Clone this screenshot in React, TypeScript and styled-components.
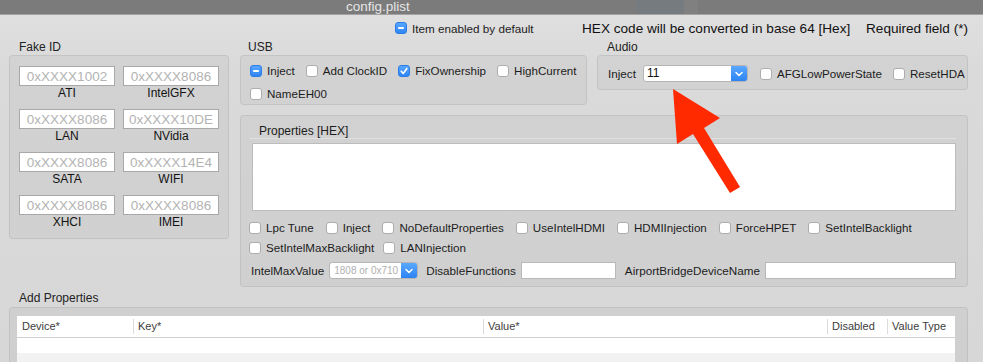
import React from "react";
import styled, { createGlobalStyle } from "styled-components";

const GlobalStyle = createGlobalStyle`
  *, *::before, *::after { box-sizing: border-box; }
  html, body { margin: 0; padding: 0; overflow: hidden; }
  body {
    background: #d8d8d8;
    font-family: "Liberation Sans", Arial, sans-serif;
    font-size: 12px;
    color: #1c1c1c;
  }
`;

const Window = styled.div`
  position: relative;
  width: 983px;
  height: 362px;
  overflow: hidden;
  background: linear-gradient(to bottom, #e0e0e0 0px, #dadada 70px, #d7d7d7 100%);
`;

const TitleBar = styled.div`
  height: 15px;
  padding-left: 346px;
  background: linear-gradient(to right, #7b7b7b 636px, #767b7f 636px, #767b7f 684px, #808080 684px, #808080 698px, #7b7b7b 698px);
  border-bottom: 1px solid #a3a3a3;
  color: #e6e6e6;
  font-size: 13.5px;
  line-height: 14px;
`;

const Toolbar = styled.div`
  display: grid;
  grid-template-columns: 187px 284px 1fr;
  align-items: center;
  height: 25px;
  padding-left: 395px;
  padding-top: 1px;
`;

const ToolItem = styled.div`
  display: flex;
  align-items: center;
  gap: 5px;
  font-size: 11.7px;
`;

const Note = styled.span`
  font-size: 13.6px;
  color: #111;
`;

const Main = styled.div`
  display: grid;
  grid-template-columns: 220px 1fr;
  column-gap: 11px;
  padding: 0 15px 0 9px;
`;

const Section = styled.div`
  display: flex;
  flex-direction: column;
`;

const Legend = styled.div<{ $indent?: number }>`
  height: 15px;
  line-height: 15px;
  padding-left: ${(p) => p.$indent ?? 9}px;
  font-size: 12px;
  color: #222;
`;

const Panel = styled.div`
  background: rgba(0, 0, 0, 0.035);
  border: 1px solid rgba(0, 0, 0, 0.07);
  border-radius: 4px;
`;

/* Fake ID */
const FakeGrid = styled(Panel)`
  display: grid;
  grid-template-columns: 96px 96px;
  column-gap: 8px;
  row-gap: 8px;
  padding: 10px 9px 8px;
`;

const FakeCell = styled.div`
  display: flex;
  flex-direction: column;
  align-items: center;
`;

const HexInput = styled.input`
  width: 96px;
  height: 20px;
  padding: 0;
  border: 1px solid #a8a8a8;
  background: #fff;
  font-family: "Liberation Sans", Arial, sans-serif;
  font-size: 13.5px;
  text-align: center;
  outline: none;
  &::placeholder { color: #b3b3b3; }
`;

const FakeLabel = styled.div`
  line-height: 15px;
  font-size: 12px;
  color: #111;
`;

/* right column */
const RightCol = styled.div`
  display: flex;
  flex-direction: column;
`;

const TopRow = styled.div`
  display: flex;
  align-items: flex-start;
  gap: 10px;
`;

const UsbPanel = styled(Panel)`
  width: 347px;
  display: flex;
  flex-direction: column;
  gap: 7px;
  padding: 7px 9px 2px;
`;

const CheckRow = styled.div<{ $gap?: number; $top?: number }>`
  display: flex;
  align-items: center;
  gap: ${(p) => p.$gap ?? 11}px;
  height: 16px;
  margin-top: ${(p) => p.$top ?? 0}px;
`;

const CheckItem = styled.label`
  display: inline-flex;
  align-items: center;
  gap: 5px;
  line-height: 16px;
  font-size: 11.6px;
  white-space: nowrap;
  color: #1c1c1c;
`;

const FieldText = styled.span`
  font-size: 11.7px;
`;

const AudioPanel = styled(Panel)`
  width: 371px;
  height: 35px;
  display: flex;
  align-items: center;
  padding: 2px 10px 0;
`;

const Spaced = styled.span<{ $left: number; $grow?: boolean }>`
  margin-left: ${(p) => p.$left}px;
  display: inline-flex;
  align-items: center;
  font-size: 11.7px;
  ${(p) => (p.$grow ? "flex: 1;" : "")}
`;

const PropsPanel = styled(Panel)`
  margin-top: 10px;
  padding: 0 11px 7px 8px;
`;

const PropsTitle = styled.div`
  height: 23px;
  padding: 8px 0 0 9px;
  line-height: 15px;
  border-bottom: 1px solid rgba(255, 255, 255, 0.35);
  margin-left: 1px;
`;

const HexArea = styled.div`
  height: 68px;
  margin: 4px 0 0 3px;
  background: #fff;
  border: 1px solid #bcbcbc;
`;

const FieldRow = styled.div`
  display: flex;
  align-items: center;
  height: 17px;
  margin-top: 6px;
  padding-left: 2px;
`;

const TextField = styled.div<{ $width?: number }>`
  height: 17px;
  ${(p) => (p.$width ? `width: ${p.$width}px;` : "flex: 1;")}
  background: #fff;
  border: 1px solid #b9b9b9;
`;

/* popup */
const Popup = styled.div<{ $width: number }>`
  display: flex;
  width: ${(p) => p.$width}px;
  height: 17px;
  background: #fff;
  border: 1px solid #b5b5b5;
  border-radius: 3px;
  overflow: hidden;
`;

const PopupText = styled.span<{ $dim?: boolean }>`
  flex: 1;
  padding-left: ${(p) => (p.$dim ? 4 : 3)}px;
  line-height: 15px;
  font-size: ${(p) => (p.$dim ? 10 : 12)}px;
  color: ${(p) => (p.$dim ? "#b0b0b0" : "#111")};
`;

const PopupButton = styled.span`
  width: 16px;
  display: flex;
  align-items: center;
  justify-content: center;
  background: linear-gradient(#5aa8ff, #2d83f3);
`;

/* checkbox */
type CheckState = "off" | "on" | "mixed";

const CheckBox = styled.span<{ $state: CheckState }>`
  flex: none;
  width: 12px;
  height: 12px;
  border-radius: 3px;
  display: inline-flex;
  align-items: center;
  justify-content: center;
  background: ${(p) => (p.$state === "off" ? "#fff" : "linear-gradient(#58a6ff, #2f85f5)")};
  border: 1px solid ${(p) => (p.$state === "off" ? "#adadad" : "#2b7ce6")};
`;

const Dash = styled.span`
  width: 6px;
  height: 2px;
  border-radius: 1px;
  background: #fff;
`;

/* add properties */
const AddSection = styled.div`
  padding: 4px 15px 0 9px;
`;

const AddPanel = styled(Panel)`
  margin-top: 1px;
  height: 70px;
  padding: 8px 12px 0 7px;
`;

const Table = styled.div`
  background: #fff;
`;

const HeadRow = styled.div`
  display: grid;
  grid-template-columns: 116px 350px 344px 60px 1fr;
  height: 22px;
  border-bottom: 1px solid #d0d0d0;
`;

const HeadCell = styled.div<{ $first?: boolean }>`
  position: relative;
  padding-left: 5px;
  line-height: 21px;
  font-size: 11px;
  color: #3c3c3c;
  &::before {
    content: "";
    display: ${(p) => (p.$first ? "none" : "block")};
    position: absolute;
    left: 0;
    top: 3px;
    bottom: 3px;
    width: 1px;
    background: #dcdcdc;
  }
`;

const BodyRow = styled.div<{ $alt?: boolean }>`
  height: ${(p) => (p.$alt ? 20 : 15)}px;
  background: ${(p) => (p.$alt ? "#f2f2f2" : "#fff")};
`;

const Arrow = styled.svg`
  position: absolute;
  left: 0;
  top: 0;
  pointer-events: none;
`;

const Check = ({ state = "off", label }: { state?: CheckState; label: string }) => (
  <CheckItem>
    <CheckBox $state={state}>
      {state === "mixed" && <Dash />}
      {state === "on" && (
        <svg width="10" height="10" viewBox="0 0 10 10">
          <path d="M2.2 5.3 L4.2 7.4 L7.9 2.6" fill="none" stroke="#fff" strokeWidth="1.6" strokeLinecap="round" strokeLinejoin="round" />
        </svg>
      )}
    </CheckBox>
    {label}
  </CheckItem>
);

const Select = ({ width, value, dim }: { width: number; value: string; dim?: boolean }) => (
  <Popup $width={width}>
    <PopupText $dim={dim}>{value}</PopupText>
    <PopupButton>
      <svg width="10" height="8" viewBox="0 0 10 8">
        <path d="M2 2.5 L5 5.5 L8 2.5" fill="none" stroke="#fff" strokeWidth="1.5" strokeLinecap="round" strokeLinejoin="round" />
      </svg>
    </PopupButton>
  </Popup>
);

const fakeIds = [
  ["0xXXXX1002", "ATI"],
  ["0xXXXX8086", "IntelGFX"],
  ["0xXXXX8086", "LAN"],
  ["0xXXXX10DE", "NVidia"],
  ["0xXXXX8086", "SATA"],
  ["0xXXXX14E4", "WIFI"],
  ["0xXXXX8086", "XHCI"],
  ["0xXXXX8086", "IMEI"],
];

const columns = ["Device*", "Key*", "Value*", "Disabled", "Value Type"];

export default function App() {
  return (
    <Window>
      <GlobalStyle />
      <TitleBar>config.plist</TitleBar>
      <Toolbar>
        <ToolItem>
          <CheckBox $state="mixed">
            <Dash />
          </CheckBox>
          Item enabled by default
        </ToolItem>
        <Note>HEX code will be converted in base 64 [Hex]</Note>
        <Note>Required field (*)</Note>
      </Toolbar>

      <Main>
        <Section>
          <Legend $indent={10}>Fake ID</Legend>
          <FakeGrid>
            {fakeIds.map(([hex, name], i) => (
              <FakeCell key={i}>
                <HexInput placeholder={hex} readOnly />
                <FakeLabel>{name}</FakeLabel>
              </FakeCell>
            ))}
          </FakeGrid>
        </Section>

        <RightCol>
          <TopRow>
            <Section>
              <Legend $indent={8}>USB</Legend>
              <UsbPanel>
                <CheckRow>
                  <Check state="mixed" label="Inject" />
                  <Check label="Add ClockID" />
                  <Check state="on" label="FixOwnership" />
                  <Check label="HighCurrent" />
                </CheckRow>
                <CheckRow>
                  <Check label="NameEH00" />
                </CheckRow>
              </UsbPanel>
            </Section>
            <Section>
              <Legend $indent={10}>Audio</Legend>
              <AudioPanel>
                <FieldText>Inject</FieldText>
                <Spaced $left={7}>
                  <Select width={105} value="11" />
                </Spaced>
                <Spaced $left={12}>
                  <Check label="AFGLowPowerState" />
                </Spaced>
                <Spaced $left={11}>
                  <Check label="ResetHDA" />
                </Spaced>
              </AudioPanel>
            </Section>
          </TopRow>

          <PropsPanel>
            <PropsTitle>Properties [HEX]</PropsTitle>
            <HexArea />
            <CheckRow $gap={12} $top={9}>
              <Check label="Lpc Tune" />
              <Check label="Inject" />
              <Check label="NoDefaultProperties" />
              <Check label="UseIntelHDMI" />
              <Check label="HDMIInjection" />
              <Check label="ForceHPET" />
              <Check label="SetIntelBacklight" />
            </CheckRow>
            <CheckRow $gap={9} $top={4}>
              <Check label="SetIntelMaxBacklight" />
              <Check label="LANInjection" />
            </CheckRow>
            <FieldRow>
              <FieldText>IntelMaxValue</FieldText>
              <Spaced $left={5}>
                <Select width={89} value="1808 or 0x710" dim />
              </Spaced>
              <Spaced $left={8}>DisableFunctions</Spaced>
              <Spaced $left={5}>
                <TextField $width={95} />
              </Spaced>
              <Spaced $left={9}>AirportBridgeDeviceName</Spaced>
              <Spaced $left={5} $grow>
                <TextField />
              </Spaced>
            </FieldRow>
          </PropsPanel>
        </RightCol>
      </Main>

      <AddSection>
        <Legend $indent={10}>Add Properties</Legend>
        <AddPanel>
          <Table>
            <HeadRow>
              {columns.map((c, i) => (
                <HeadCell key={c} $first={i === 0}>
                  {c}
                </HeadCell>
              ))}
            </HeadRow>
            <BodyRow />
            <BodyRow $alt />
          </Table>
        </AddPanel>
      </AddSection>

      <Arrow width="983" height="362" viewBox="0 0 983 362">
        <polygon
          points="673,89 720,118 704,128 740,187 730,193 693,134 677,144"
          fill="#ff2a00"
        />
      </Arrow>
    </Window>
  );
}
